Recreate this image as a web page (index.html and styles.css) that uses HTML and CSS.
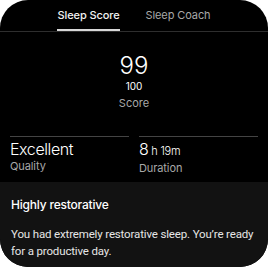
FILE: index.html
```html
<!DOCTYPE html>
<html>
<head>
<meta charset="utf-8">
<link rel="stylesheet" href="styles.css">
</head>
<body>
<div class="card">
  <div class="tabs">
    <div class="tab active">Sleep Score</div>
    <div class="tab">Sleep Coach</div>
  </div>
  <div class="score">
    <div class="score-value">99</div>
    <div class="score-max">100</div>
    <div class="score-label">Score</div>
  </div>
  <div class="stats">
    <div class="stat">
      <div class="stat-value">Excellent</div>
      <div class="stat-label">Quality</div>
    </div>
    <div class="stat">
      <div class="stat-value">8<span class="unit"> h 19m</span></div>
      <div class="stat-label">Duration</div>
    </div>
  </div>
  <div class="summary">
    <div class="summary-title">Highly restorative</div>
    <div class="summary-text">You had extremely restorative sleep. You’re ready for a productive day.</div>
  </div>
</div>
</body>
</html>
```
FILE: styles.css
```css
html, body {
  margin: 0;
  padding: 0;
  background: #ffffff;
}
body {
  width: 268px;
  height: 267px;
  overflow: hidden;
  font-family: Inter, "Noto Sans", sans-serif;
}
.card {
  width: 268px;
  height: 267px;
  background: #000;
  border-radius: 28px;
  overflow: hidden;
  display: flex;
  flex-direction: column;
  color: #fff;
}
.tabs {
  display: flex;
  justify-content: center;
  align-items: flex-end;
  gap: 26px;
  height: 31px;
  border-bottom: 1px solid #2e2e2e;
}
.tab {
  font-size: 11px;
  line-height: 14px;
  padding: 8px 0 7px;
  border-bottom: 2px solid transparent;
  color: #a8a8a8;
  letter-spacing: -0.1px;
}
.tab.active {
  color: #f2f2f2;
  font-weight: 500;
  border-bottom-color: #d8d8d8;
}
.score {
  display: flex;
  flex-direction: column;
  align-items: center;
  margin-top: 20px;
}
.score-value {
  font-size: 24px;
  line-height: 28px;
  font-weight: 300;
}
.score-max {
  font-size: 10px;
  line-height: 12px;
}
.score-label {
  margin-top: 4px;
  font-size: 11px;
  line-height: 14px;
  color: #a8a8a8;
}
.stats {
  display: flex;
  gap: 10px;
  padding: 0 10px;
  margin-top: 26px;
}
.stat {
  flex: 1;
  border-top: 1px solid #444;
  padding-top: 2px;
  padding-bottom: 7px;
}
.stat-value {
  font-size: 16px;
  line-height: 20px;
  font-weight: 300;
  letter-spacing: -0.4px;
}
.unit {
  font-size: 11px;
  letter-spacing: -0.2px;
}
.stat-label {
  font-size: 11px;
  line-height: 14px;
  color: #a8a8a8;
  letter-spacing: -0.1px;
}
.summary {
  flex: 1;
  background: #121212;
  padding: 15px 8px 0 11px;
}
.summary-title {
  font-size: 12px;
  line-height: 16px;
  font-weight: 500;
  letter-spacing: -0.2px;
}
.summary-text {
  margin-top: 13px;
  font-family: Roboto, Inter, sans-serif;
  font-size: 11.5px;
  line-height: 17px;
  color: #e6e6e6;
  letter-spacing: -0.15px;
}
```
